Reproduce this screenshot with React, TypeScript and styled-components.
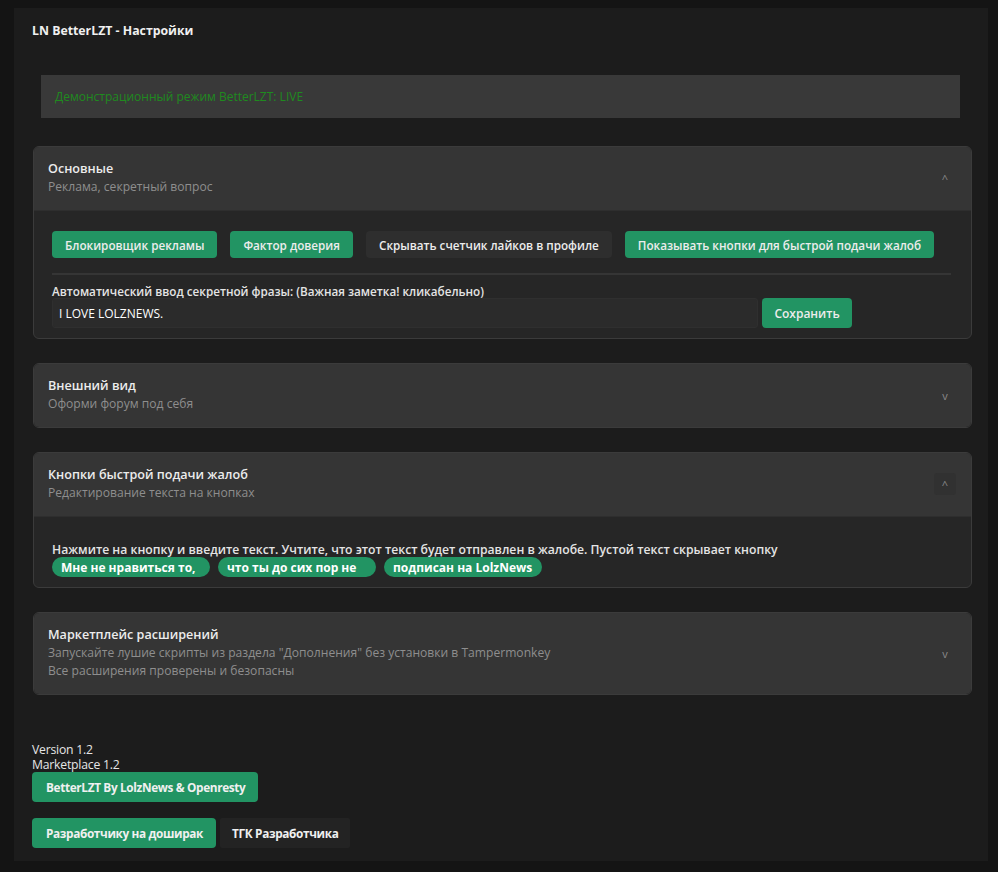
import styled, { createGlobalStyle } from 'styled-components';

const GlobalStyle = createGlobalStyle`
    html, body {
        margin: 0;
        padding: 0;
        background: #141414;
    }
    body {
        font-family: "Open Sans", "Noto Sans", sans-serif;
        color: #e6e6e6;
    }
    * { box-sizing: border-box; }
`;

const Page = styled.div`
    padding: 8px 10px 12px 14px;
    min-height: 872px;
`;

const Panel = styled.div`
    background: #1c1c1c;
    padding: 14px 16px 13px 19px;
    display: flex;
    flex-direction: column;
`;

const Title = styled.h1`
    margin: 0 0 0 -1px;
    font-size: 12.3px;
    font-weight: 700;
    line-height: 18px;
    color: #f0f0f0;
`;

const DemoBox = styled.div`
    margin: 35px 12px 28px 8px;
    background: #393939;
    padding: 14px 14px;
    font-size: 12px;
    line-height: 15px;
    color: #1f8a1f;
`;

const Sections = styled.div`
    display: flex;
    flex-direction: column;
    gap: 24px;
`;

const Section = styled.div`
    border: 1px solid #3b3b3b;
    border-radius: 6px;
    overflow: hidden;
    background: #262626;
`;

const SectionHeader = styled.div`
    background: #353535;
    padding: 13px 15px 14px 14px;
    display: flex;
    align-items: center;
    justify-content: space-between;
`;

const HeaderText = styled.div`
    display: flex;
    flex-direction: column;
`;

const SectionTitle = styled.div`
    font-size: 12.6px;
    font-weight: 600;
    line-height: 18px;
    color: #ececec;
`;

const SectionSub = styled.div`
    font-size: 12.1px;
    line-height: 18px;
    color: #8e8e8e;
`;

const Chevron = styled.span<{ $boxed?: boolean }>`
    width: 22px;
    height: 22px;
    display: flex;
    align-items: center;
    justify-content: center;
    font-size: 11px;
    color: #8a8a8a;
    border-radius: 3px;
    background: ${p => (p.$boxed ? '#313131' : 'transparent')};
`;

const SectionBody = styled.div<{ $top: number }>`
    padding: ${p => p.$top}px 20px 10px 18px;
    border-top: 1px solid #2e2e2e;
`;

const ButtonRow = styled.div`
    display: flex;
    gap: 13px;
`;

const ToggleButton = styled.button<{ $on?: boolean }>`
    height: 27px;
    padding: 0 13px;
    border: none;
    border-radius: 4px;
    background: ${p => (p.$on ? '#229463' : '#2e2e2e')};
    color: #ececec;
    font-family: inherit;
    font-size: 11.7px;
    font-weight: 600;
    white-space: nowrap;
`;

const Divider = styled.div`
    height: 2px;
    background: #353535;
    margin: 15px 0 9px;
`;

const Label = styled.div`
    font-size: 11.7px;
    font-weight: 600;
    line-height: 14px;
    color: #e4e4e4;
`;

const InputRow = styled.div`
    display: flex;
    gap: 4px;
`;

const TextInput = styled.input`
    width: 706px;
    height: 30px;
    background: #2b2b2b;
    border: 1px solid #2f2f2f;
    border-radius: 3px;
    padding: 0 6px;
    color: #ffffff;
    font-family: inherit;
    font-size: 12px;
    outline: none;
`;

const SaveButton = styled.button`
    height: 30px;
    width: 90px;
    border: none;
    border-radius: 4px;
    background: #229463;
    color: #ececec;
    font-family: inherit;
    font-size: 12px;
    font-weight: 600;
`;

const Hint = styled.div`
    font-size: 12.2px;
    font-weight: 600;
    line-height: 14px;
    color: #e4e4e4;
`;

const PillRow = styled.div`
    display: flex;
    gap: 8px;
`;

const Pill = styled.input`
    width: 158px;
    height: 20px;
    border: none;
    border-radius: 10px;
    background: #229463;
    color: #ffffff;
    padding: 0 9px;
    font-family: inherit;
    font-size: 12px;
    font-weight: 700;
    outline: none;
`;

const Footer = styled.div`
    margin-top: 47px;
    margin-left: -1px;
    display: flex;
    flex-direction: column;
    align-items: flex-start;
`;

const FooterLine = styled.div`
    font-size: 12.2px;
    line-height: 15px;
    color: #e6e6e6;
    letter-spacing: -0.2px;
`;

const FooterButton = styled.button<{ $on?: boolean }>`
    height: 30px;
    padding: ${p => (p.$on ? '0 13px 0 14px' : '0 12px')};
    border: none;
    border-radius: ${p => (p.$on ? '4px' : '2px')};
    background: ${p => (p.$on ? '#229463' : '#232323')};
    color: #f0f0f0;
    font-family: inherit;
    font-size: 11.8px;
    font-weight: 700;
    letter-spacing: -0.35px;
`;

const FooterRow = styled.div`
    display: flex;
    gap: 4px;
    margin-top: 16px;
`;

const App = () => {
    return (
        <>
            <GlobalStyle />
            <Page>
                <Panel>
                    <Title>LN BetterLZT - Настройки</Title>
                    <DemoBox>Демонстрационный режим BetterLZT: LIVE</DemoBox>
                    <Sections>
                        <Section>
                            <SectionHeader>
                                <HeaderText>
                                    <SectionTitle>Основные</SectionTitle>
                                    <SectionSub>Реклама, секретный вопрос</SectionSub>
                                </HeaderText>
                                <Chevron>^</Chevron>
                            </SectionHeader>
                            <SectionBody $top={20}>
                                <ButtonRow>
                                    <ToggleButton $on>Блокировщик рекламы</ToggleButton>
                                    <ToggleButton $on>Фактор доверия</ToggleButton>
                                    <ToggleButton>Скрывать счетчик лайков в профиле</ToggleButton>
                                    <ToggleButton $on>Показывать кнопки для быстрой подачи жалоб</ToggleButton>
                                </ButtonRow>
                                <Divider />
                                <Label>Автоматический ввод секретной фразы: (Важная заметка! кликабельно)</Label>
                                <InputRow>
                                    <TextInput defaultValue="I LOVE LOLZNEWS." />
                                    <SaveButton>Сохранить</SaveButton>
                                </InputRow>
                            </SectionBody>
                        </Section>

                        <Section>
                            <SectionHeader>
                                <HeaderText>
                                    <SectionTitle>Внешний вид</SectionTitle>
                                    <SectionSub>Оформи форум под себя</SectionSub>
                                </HeaderText>
                                <Chevron>v</Chevron>
                            </SectionHeader>
                        </Section>

                        <Section>
                            <SectionHeader>
                                <HeaderText>
                                    <SectionTitle>Кнопки быстрой подачи жалоб</SectionTitle>
                                    <SectionSub>Редактирование текста на кнопках</SectionSub>
                                </HeaderText>
                                <Chevron $boxed>^</Chevron>
                            </SectionHeader>
                            <SectionBody $top={26}>
                                <Hint>Нажмите на кнопку и введите текст. Учтите, что этот текст будет отправлен в жалобе. Пустой текст скрывает кнопку</Hint>
                                <PillRow>
                                    <Pill defaultValue="Мне не нравиться то," />
                                    <Pill defaultValue="что ты до сих пор не" />
                                    <Pill defaultValue="подписан на LolzNews" />
                                </PillRow>
                            </SectionBody>
                        </Section>

                        <Section>
                            <SectionHeader>
                                <HeaderText>
                                    <SectionTitle>Маркетплейс расширений</SectionTitle>
                                    <SectionSub>Запускайте лушие скрипты из раздела "Дополнения" без установки в Tampermonkey</SectionSub>
                                    <SectionSub>Все расширения проверены и безопасны</SectionSub>
                                </HeaderText>
                                <Chevron>v</Chevron>
                            </SectionHeader>
                        </Section>
                    </Sections>

                    <Footer>
                        <FooterLine>Version 1.2</FooterLine>
                        <FooterLine>Marketplace 1.2</FooterLine>
                        <FooterButton $on>BetterLZT By LolzNews &amp; Openresty</FooterButton>
                        <FooterRow>
                            <FooterButton $on>Разработчику на доширак</FooterButton>
                            <FooterButton>ТГК Разработчика</FooterButton>
                        </FooterRow>
                    </Footer>
                </Panel>
            </Page>
        </>
    );
};

export default App;
